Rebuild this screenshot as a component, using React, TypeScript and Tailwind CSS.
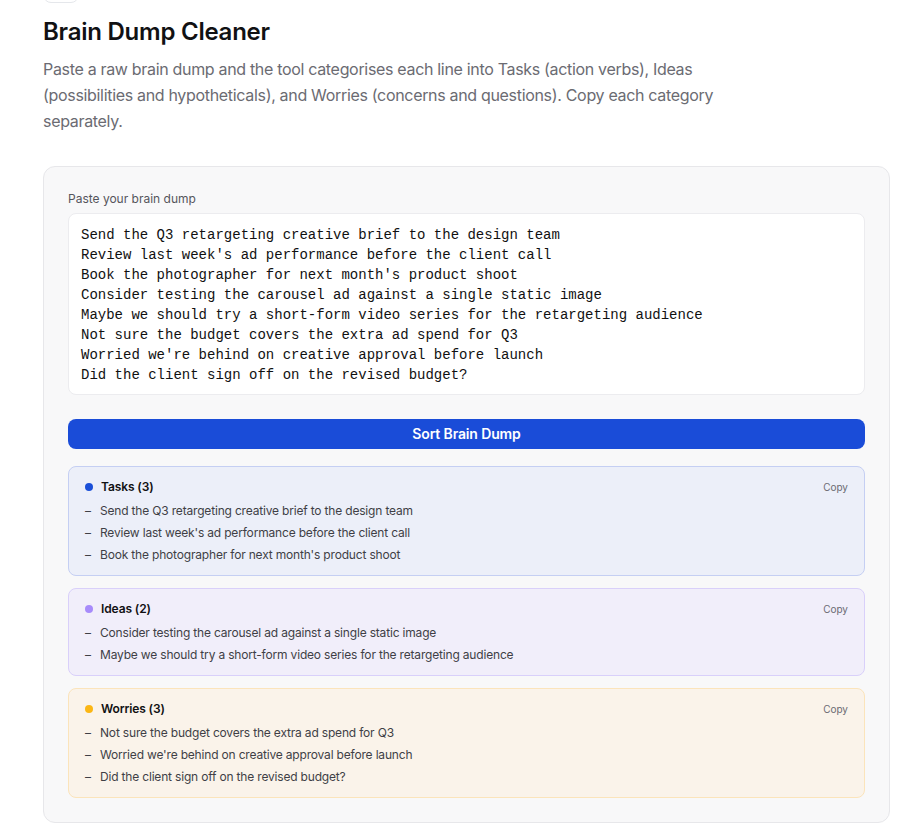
const input = `Send the Q3 retargeting creative brief to the design team
Review last week's ad performance before the client call
Book the photographer for next month's product shoot
Consider testing the carousel ad against a single static image
Maybe we should try a short-form video series for the retargeting audience
Not sure the budget covers the extra ad spend for Q3
Worried we're behind on creative approval before launch
Did the client sign off on the revised budget?`;

const groups = [
  {
    name: "Tasks",
    dot: "bg-[#1a4fd8]",
    card: "bg-[#eceff9] border-[#c5cff3]",
    items: [
      "Send the Q3 retargeting creative brief to the design team",
      "Review last week's ad performance before the client call",
      "Book the photographer for next month's product shoot",
    ],
  },
  {
    name: "Ideas",
    dot: "bg-[#a78bfa]",
    card: "bg-[#f1eefa] border-[#d9d0fa]",
    items: [
      "Consider testing the carousel ad against a single static image",
      "Maybe we should try a short-form video series for the retargeting audience",
    ],
  },
  {
    name: "Worries",
    dot: "bg-[#fbb614]",
    card: "bg-[#faf3ea] border-[#fbe4bb]",
    items: [
      "Not sure the budget covers the extra ad spend for Q3",
      "Worried we're behind on creative approval before launch",
      "Did the client sign off on the revised budget?",
    ],
  },
];

export default function App() {
  return (
    <div className="min-h-screen bg-white pl-[43px] pr-[22px] pb-10 font-['Inter',sans-serif] text-[#111113]">
      {/* back button, mostly scrolled off */}
      <div className="-mt-[29px] h-8 w-9 rounded-lg border border-gray-200 bg-white" />

      <h1 className="mt-[13px] text-2xl leading-8 font-semibold tracking-[-0.01em]">Brain Dump Cleaner</h1>
      <p className="mt-2 max-w-[672px] text-base leading-[26px] tracking-[-0.02em] text-[#6b6b72]">
        Paste a raw brain dump and the tool categorises each line into Tasks (action verbs), Ideas
        (possibilities and hypotheticals), and Worries (concerns and questions). Copy each category
        separately.
      </p>

      <div className="mt-8 rounded-xl border border-[#e7e7ea] bg-[#f8f8f9] p-6">
        <label className="mb-1.5 block text-xs leading-4 text-[#55555c]">Paste your brain dump</label>
        <textarea
          defaultValue={input}
          rows={8}
          className="block w-full resize-none rounded-lg border border-[#ececef] bg-white px-3 pt-[11px] pb-[9px] font-['Liberation_Mono',monospace] text-sm leading-5 text-[#111] outline-none"
        />

        <button className="mt-6 w-full rounded-lg bg-[#1a4cd8] py-[5px] text-sm leading-5 font-semibold tracking-[-0.01em] text-white">
          Sort Brain Dump
        </button>

        <div className="mt-[17px] flex flex-col gap-3">
          {groups.map((g) => (
            <div key={g.name} className={`rounded-lg border px-4 pt-3 pb-3 ${g.card}`}>
              <div className="flex items-center justify-between">
                <div className="flex items-center gap-2">
                  <span className={`size-2 rounded-full ${g.dot}`} />
                  <span className="text-xs leading-4 font-semibold tracking-[-0.01em] text-[#111113]">
                    {g.name} ({g.items.length})
                  </span>
                </div>
                <button className="text-[10px] leading-4 text-[#6b6b72]">Copy</button>
              </div>
              <ul className="mt-2 flex flex-col gap-1.5">
                {g.items.map((it) => (
                  <li key={it} className="flex text-xs leading-4 tracking-[-0.015em] text-[#3f3f46]">
                    <span className="w-[15px] shrink-0">–</span>
                    <span>{it}</span>
                  </li>
                ))}
              </ul>
            </div>
          ))}
        </div>
      </div>
    </div>
  );
}
